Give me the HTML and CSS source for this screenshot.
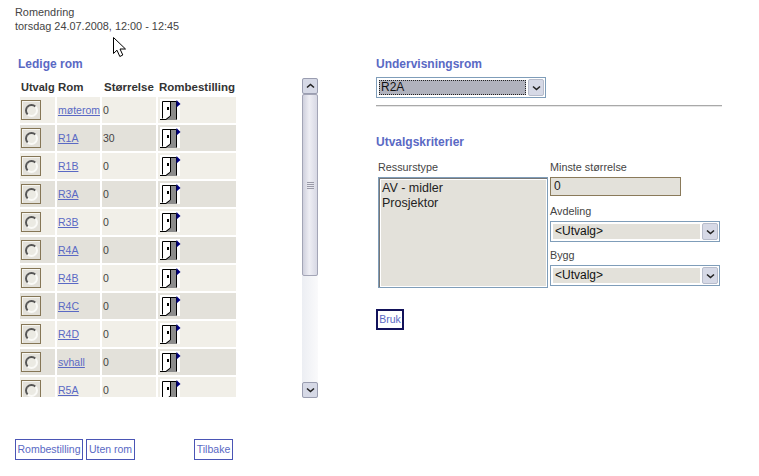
FILE: index.html
```html
<!DOCTYPE html>
<html lang="no">
<head>
<meta charset="utf-8">
<title>Romendring</title>
<link rel="stylesheet" href="styles.css">
</head>
<body>
<svg class="defs" width="0" height="0">
  <symbol id="door" viewBox="0 0 22 22">
    <rect x="1" width="20" height="21" fill="#fff"/>
    <path d="M11 2H17.500V21H7V19.500L11 16.500Z" fill="#8c8c8c"/>
    <path d="M3.500 19.500V2.500H17.500V20.500M1 20.500H7L11.500 17V2.500" fill="none" stroke="#000" stroke-width="1"/>
    <rect x="8" y="8" width="2" height="3" fill="#000"/>
    <path d="M17.500 1L21.500 5L17.500 8.500Z" fill="#000080"/>
  </symbol>
  <symbol id="cursor" viewBox="0 0 14 21">
    <path d="M.5.500V16.500L4 13.200L6.800 19.500L9.800 18L7 12H12.500Z" fill="#fff" stroke="#000"/>
  </symbol>
</svg>

<svg class="cursor"><use href="#cursor"/></svg>

<header class="head">
  <div>Romendring</div>
  <div>torsdag 24.07.2008, 12:00 - 12:45</div>
</header>

<main class="main">
  <section class="left">
    <h2 class="title">Ledige rom</h2>
    <div class="listwrap">
      <div class="viewport">
        <table class="rooms">
          <thead>
            <tr><th>Utvalg</th><th>Rom</th><th>Størrelse</th><th>Rombestilling</th></tr>
          </thead>
          <tbody>
            <tr><td class="c1"><span class="radio"><i></i></span></td><td class="c2"><a href="#">møterom</a></td><td class="c3">0</td><td class="c4"><svg class="door"><use href="#door"/></svg></td></tr>
            <tr><td class="c1"><span class="radio"><i></i></span></td><td class="c2"><a href="#">R1A</a></td><td class="c3">30</td><td class="c4"><svg class="door"><use href="#door"/></svg></td></tr>
            <tr><td class="c1"><span class="radio"><i></i></span></td><td class="c2"><a href="#">R1B</a></td><td class="c3">0</td><td class="c4"><svg class="door"><use href="#door"/></svg></td></tr>
            <tr><td class="c1"><span class="radio"><i></i></span></td><td class="c2"><a href="#">R3A</a></td><td class="c3">0</td><td class="c4"><svg class="door"><use href="#door"/></svg></td></tr>
            <tr><td class="c1"><span class="radio"><i></i></span></td><td class="c2"><a href="#">R3B</a></td><td class="c3">0</td><td class="c4"><svg class="door"><use href="#door"/></svg></td></tr>
            <tr><td class="c1"><span class="radio"><i></i></span></td><td class="c2"><a href="#">R4A</a></td><td class="c3">0</td><td class="c4"><svg class="door"><use href="#door"/></svg></td></tr>
            <tr><td class="c1"><span class="radio"><i></i></span></td><td class="c2"><a href="#">R4B</a></td><td class="c3">0</td><td class="c4"><svg class="door"><use href="#door"/></svg></td></tr>
            <tr><td class="c1"><span class="radio"><i></i></span></td><td class="c2"><a href="#">R4C</a></td><td class="c3">0</td><td class="c4"><svg class="door"><use href="#door"/></svg></td></tr>
            <tr><td class="c1"><span class="radio"><i></i></span></td><td class="c2"><a href="#">R4D</a></td><td class="c3">0</td><td class="c4"><svg class="door"><use href="#door"/></svg></td></tr>
            <tr><td class="c1"><span class="radio"><i></i></span></td><td class="c2"><a href="#">svhall</a></td><td class="c3">0</td><td class="c4"><svg class="door"><use href="#door"/></svg></td></tr>
            <tr><td class="c1"><span class="radio"><i></i></span></td><td class="c2"><a href="#">R5A</a></td><td class="c3">0</td><td class="c4"><svg class="door"><use href="#door"/></svg></td></tr>
          </tbody>
        </table>
      </div>
      <div class="scrollbar">
        <span class="sb-btn"><svg width="9" height="6" viewBox="0 0 9 6"><path d="M1 4.500L4.500 1.500L8 4.500" fill="none" stroke="#222" stroke-width="1.600"/></svg></span>
        <span class="sb-thumb"><span class="grip"></span></span>
        <span class="sb-track"></span>
        <span class="sb-btn"><svg width="9" height="6" viewBox="0 0 9 6"><path d="M1 1.500L4.500 4.500L8 1.500" fill="none" stroke="#222" stroke-width="1.600"/></svg></span>
      </div>
    </div>
    <div class="actions">
      <button class="btn b-order" type="button">Rombestilling</button>
      <button class="btn b-none" type="button">Uten rom</button>
      <button class="btn back" type="button">Tilbake</button>
    </div>
  </section>

  <section class="right">
    <h2 class="title">Undervisningsrom</h2>
    <div class="select room">
      <span class="value focused">R2A</span>
      <span class="arrow"><svg width="9" height="6" viewBox="0 0 9 6"><path d="M1 1.500L4.500 4.500L8 1.500" fill="none" stroke="#222" stroke-width="1.600"/></svg></span>
    </div>
    <hr class="rule">
    <h2 class="title crit">Utvalgskriterier</h2>
    <div class="criteria">
      <div class="res">
        <div class="label">Ressurstype</div>
        <div class="listbox"><div>AV - midler</div><div>Prosjektor</div></div>
      </div>
      <div class="fields">
        <div class="label">Minste størrelse</div>
        <div class="input">0</div>
        <div class="label l2">Avdeling</div>
        <div class="select wide">
          <span class="value">&lt;Utvalg&gt;</span>
          <span class="arrow"><svg width="9" height="6" viewBox="0 0 9 6"><path d="M1 1.500L4.500 4.500L8 1.500" fill="none" stroke="#222" stroke-width="1.600"/></svg></span>
        </div>
        <div class="label l3">Bygg</div>
        <div class="select wide">
          <span class="value">&lt;Utvalg&gt;</span>
          <span class="arrow"><svg width="9" height="6" viewBox="0 0 9 6"><path d="M1 1.500L4.500 4.500L8 1.500" fill="none" stroke="#222" stroke-width="1.600"/></svg></span>
        </div>
      </div>
    </div>
    <button class="btn default" type="button">Bruk</button>
  </section>
</main>
</body>
</html>
```
FILE: styles.css
```css
* { box-sizing: border-box; }
html, body { margin: 0; padding: 0; }
body {
  width: 759px;
  height: 476px;
  overflow: hidden;
  background: #fff;
  color: #444;
  font-family: "Liberation Sans", Arial, sans-serif;
  font-size: 10.500px;
  position: relative;
}
.defs { position: absolute; }
.cursor { position: absolute; left: 113px; top: 37px; width: 14px; height: 21px; }

.head { padding: 5px 0 0 15px; line-height: 14px; height: 56px; font-size: 10.900px; }

.main { display: flex; }
.left { width: 361px; padding-left: 18px; flex: none; }
.right { width: 350px; margin-left: 15px; flex: none; }

.title {
  margin: 0;
  font-size: 12px;
  line-height: 16px;
  font-weight: bold;
  color: #5a69c4;
}

.listwrap { display: flex; margin-top: 6px; height: 320px; }
.viewport { width: 284px; height: 319px; overflow: hidden; }

.rooms { border-collapse: separate; border-spacing: 2px; table-layout: fixed; width: 220px; }
.rooms th {
  padding: 0;
  height: 15px;
  font-size: 11.500px;
  font-weight: bold;
  text-align: left;
  color: #333;
  white-space: nowrap;
  line-height: 15px;
}
.rooms th:nth-child(1) { width: 35px; padding-left: 1px; font-size: 11px; }
.rooms th:nth-child(2) { width: 43px; padding-left: 1px; }
.rooms th:nth-child(3) { width: 54px; padding-left: 2px; }
.rooms th:nth-child(4) { width: 78px; padding-left: 1px; }
.rooms td { height: 26px; padding: 0; background: #f1efe8; font-size: 10.500px; vertical-align: middle; }
.rooms tbody tr:nth-child(even) td { background: #e3e1da; }
.c1, .c2, .c3, .c4 { padding-left: 1px !important; }
.c2 { white-space: nowrap; overflow: hidden; }
.rooms a { color: #5a69c4; text-decoration: underline; }

.radio {
  display: flex;
  align-items: center;
  justify-content: center;
  width: 20px;
  height: 20px;
  border: 1.500px solid #857656;
  background: #e3e1da;
  box-shadow: inset 1px 1px 0 #f6f5f0;
}
.radio i {
  display: block;
  width: 13px;
  height: 13px;
  border-radius: 50%;
  background: #ebeae3;
  border: 2px solid;
  border-color: #555 #fafaf7 #fafaf7 #555;
}
.door { display: block; width: 22px; height: 22px; }

.scrollbar {
  width: 16px;
  height: 320px;
  display: flex;
  flex-direction: column;
  background: #f0f1f5;
}
.sb-btn {
  height: 16px;
  width: 16px;
  flex: none;
  display: flex;
  align-items: center;
  justify-content: center;
  background: #d6d9e6;
  border: 1px solid #9a9db0;
  border-radius: 2px;
}
.sb-thumb {
  height: 182px;
  flex: none;
  display: flex;
  align-items: center;
  justify-content: center;
  background: linear-gradient(90deg, #cfd0dd, #eeeef4 45%, #d7d8e4);
  border: 1px solid #a3a5b6;
  border-radius: 2px;
}
.grip {
  display: block;
  width: 7px;
  height: 7px;
  background: repeating-linear-gradient(180deg, #9a9aa8 0 1px, transparent 1px 2px);
}
.sb-track { flex: 1; background: linear-gradient(90deg, #eceef3, #fafafb); }

.actions { display: flex; margin-top: 41px; margin-left: -3px; gap: 3px; }
.btn {
  font-family: inherit;
  font-size: 10.500px;
  color: #5a69c4;
  background: #fff;
  border: 1px solid #4a55b5;
  height: 21px;
  padding: 0;
  margin: 0;
  line-height: 17px;
  border-radius: 0;
  white-space: nowrap;
}
.b-order { width: 68px; }
.b-none { width: 49px; }
.back { width: 39px; margin-left: 56px; }
.default { border: 2px solid #12125a; display: block; margin-top: 21px; width: 28px; }

.select {
  display: flex;
  align-items: stretch;
  height: 21px;
  border: 1px solid #7f9db9;
  background: #fff;
  font-size: 12px;
  color: #111;
  width: 170px;
  padding: 1px;
}
.room { margin-top: 5px; }
.value {
  flex: 1;
  background: #e3e1da;
  margin: 1px 2px 1px 1px;
  padding-left: 2px;
  line-height: 14px;
}
.focused { background: #b0b2bd; outline: 1px dotted #222; outline-offset: -1px; }
.arrow {
  width: 16px;
  flex: none;
  display: flex;
  align-items: center;
  justify-content: center;
  background: #d6d9e6;
  border: 1px solid #b7bccb;
  border-radius: 2px;
}

.rule { margin: 7px 0 0; width: 346px; height: 2px; border: 0; background: #a9a9a9; border-bottom: 1px solid #e6e6e6; }
.crit { margin-top: 27px; }

.criteria { display: flex; margin-top: 11px; padding-left: 2px; gap: 2px; }
.res { width: 170px; }
.fields { width: 170px; }
.label { font-size: 10.800px; line-height: 13px; color: #444; }
.l2 { margin-top: 9px; margin-bottom: 3px; }
.l3 { margin-top: 7px; margin-bottom: 3px; }
.listbox {
  margin-top: 3px;
  height: 111px;
  border: 1px solid #7f9db9;
  background: #e3e1da;
  box-shadow: inset 1px 1px 0 #777, inset -1px -1px 0 #fff, inset 2px 2px 0 #fff;
  padding: 3px;
  font-size: 12.500px;
  line-height: 15px;
  color: #222;
}
.input {
  margin-top: 3px;
  width: 131px;
  height: 19px;
  border: 1px solid #8a7a5a;
  background: #e3e1da;
  font-size: 12px;
  line-height: 17px;
  padding-left: 3px;
  color: #222;
}
```
